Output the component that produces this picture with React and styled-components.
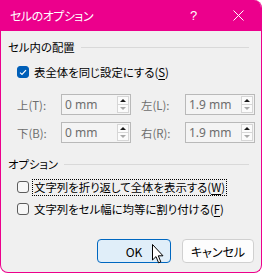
import styled, { createGlobalStyle } from "styled-components";

const GlobalStyle = createGlobalStyle`
  html, body {
    margin: 0;
    padding: 0;
    background: #ffffff;
  }
  body {
    font-family: "Noto Sans CJK JP", "Noto Sans", sans-serif;
    font-feature-settings: "palt";
  }
`;

const Window = styled.div`
  box-sizing: border-box;
  width: 262px;
  height: 273px;
  display: flex;
  flex-direction: column;
  background: #f0f0f0;
  border: 1px solid #ec008c;
  border-top: none;
  border-radius: 0 8px 8px 8px;
  overflow: hidden;`

const TitleBar = styled.div`
  height: 31px;
  flex: none;
  display: flex;
  align-items: center;
  padding: 0 0 0 9px;
  background: #ec008c;
  color: #ffffff;`

const TitleText = styled.div`
  flex: 1;
  font-size: 12px;
  letter-spacing: -0.5px;`

const TitleButton = styled.div`
  width: 45px;
  height: 31px;
  display: flex;
  align-items: center;
  justify-content: center;
  font-family: "Liberation Sans", sans-serif;
  font-size: 13px;`

const Body = styled.div`
  flex: 1;
  display: flex;
  flex-direction: column;
  padding: 8px 7px 0 7px;
  font-size: 11.4px;
  color: #000000;`

const GroupHeader = styled.div`
  display: flex;
  align-items: center;
  height: 16px;
  margin-top: ${p => p.$top || 0}px;`

const GroupLine = styled.div`
  flex: 1;
  height: 1px;
  margin: 0 5px 0 6px;
  background: #d9d9d9;`

const CheckRow = styled.label`
  display: flex;
  align-items: center;
  height: 16px;
  margin: ${p => p.$top || 0}px 0 0 9px;`

const Box = styled.span`
  box-sizing: border-box;
  width: 12px;
  height: 12px;
  flex: none;
  border-radius: 3px;
  display: flex;
  align-items: center;
  justify-content: center;
  margin-right: 4px;
  background: ${p => (p.$checked ? "#005fb8" : "#f7f7f7")};
  border: 1px solid ${p => (p.$checked ? "#005fb8" : "#5c5c5c")};`

const CheckLabel = styled.span`
  padding: 0 1px;
  line-height: 15px;
  outline: ${p => (p.$focus ? "1px dotted #000" : "none")};
  outline-offset: 0;`

const Key = styled.u`
  text-underline-offset: 2px;`

const FieldGrid = styled.div`
  display: grid;
  grid-template-columns: 44px 70px 10px 44px 70px;
  row-gap: 7px;
  margin: 14px 0 0 9px;
  align-items: center;`

const FieldLabel = styled.span`
  color: #6d6d6d;`

const Spin = styled.div`
  box-sizing: border-box;
  height: 21px;
  display: flex;
  border: 1px solid #b9b9b9;
  background: #f4f4f4;
  padding: 1px;`

const SpinText = styled.div`
  flex: 1;
  display: flex;
  align-items: center;
  padding-left: 2px;
  color: #6d6d6d;
  font-family: "Noto Sans", sans-serif;
  font-size: 12px;`

const SpinButtons = styled.div`
  width: 12px;
  display: flex;
  flex-direction: column;`

const Arrow = styled.div`
  flex: 1;
  display: flex;
  align-items: center;
  justify-content: center;
  background: #fbfbfb;
  border: 1px solid #d6d6d6;
  border-top: ${p => (p.$down ? "none" : "1px solid #d6d6d6")};
  &::after {
    content: "";
    border-left: 3px solid transparent;
    border-right: 3px solid transparent;
    ${p => (p.$down
      ? "border-top: 3px solid #a8a8a8;"
      : "border-bottom: 3px solid #1a1a1a;")}
  }`

const Buttons = styled.div`
  display: flex;
  justify-content: flex-end;
  gap: 11px;
  margin-top: 22px;`

const Button = styled.div`
  position: relative;
  box-sizing: border-box;
  width: ${p => p.$w}px;
  height: 24px;
  border-radius: 4px;
  display: flex;
  align-items: center;
  justify-content: center;
  font-size: 12px;
  color: #000;
  background: ${p => (p.$primary ? "#e0eef9" : "#fdfdfd")};
  border: 1px solid ${p => (p.$primary ? "#0067c0" : "#d0d0d0")};`

const Cursor = styled.svg`
  position: absolute;
  left: 54px;
  top: 4px;`

const SpinField = ({ value }) => (
  <Spin>
    <SpinText>{value}</SpinText>
    <SpinButtons>
      <Arrow />
      <Arrow $down />
    </SpinButtons>
  </Spin>
);

const Check = ({ checked }) => (
  <Box $checked={checked}>
    {checked && (
      <svg width="8" height="7" viewBox="0 0 8 7">
        <path d="M1 3.6 L3 5.5 L7 1.2" fill="none" stroke="#fff" strokeWidth="1.2" />
      </svg>
    )}
  </Box>
);

const App = () => {
  return (
    <>
      <GlobalStyle />
      <Window>
        <TitleBar>
          <TitleText>セルのオプション</TitleText>
          <TitleButton>?</TitleButton>
          <TitleButton>
            <svg width="11" height="11" viewBox="0 0 11 11">
              <path d="M0.5 0.5 L10.5 10.5 M10.5 0.5 L0.5 10.5" stroke="#fff" strokeWidth="1" />
            </svg>
          </TitleButton>
        </TitleBar>
        <Body>
          <GroupHeader>
            セル内の配置
            <GroupLine />
          </GroupHeader>
          <CheckRow $top={9}>
            <Check checked />
            <CheckLabel>表全体を同じ設定にする(<Key>S</Key>)</CheckLabel>
          </CheckRow>
          <FieldGrid>
            <FieldLabel>上(T):</FieldLabel>
            <SpinField value="0 mm" />
            <span />
            <FieldLabel>左(L):</FieldLabel>
            <SpinField value="1.9 mm" />
            <FieldLabel>下(B):</FieldLabel>
            <SpinField value="0 mm" />
            <span />
            <FieldLabel>右(R):</FieldLabel>
            <SpinField value="1.9 mm" />
          </FieldGrid>
          <GroupHeader $top={13}>
            オプション
            <GroupLine />
          </GroupHeader>
          <CheckRow $top={7}>
            <Check />
            <CheckLabel $focus>文字列を折り返して全体を表示する(<Key>W</Key>)</CheckLabel>
          </CheckRow>
          <CheckRow $top={6}>
            <Check />
            <CheckLabel>文字列をセル幅に均等に割り付ける(<Key>F</Key>)</CheckLabel>
          </CheckRow>
          <Buttons>
            <Button $primary $w={74}>
              OK
              <Cursor width="13" height="20" viewBox="0 0 13 20">
                <path d="M0.5 0.5 L0.5 16 L4 12.6 L6.6 18.8 L8.8 17.9 L6.3 11.8 L11 11.8 Z" fill="#fff" stroke="#000" strokeWidth="1" strokeLinejoin="round" />
              </Cursor>
            </Button>
            <Button $w={72}>キャンセル</Button>
          </Buttons>
        </Body>
      </Window>
    </>
  );
};

export default App;
